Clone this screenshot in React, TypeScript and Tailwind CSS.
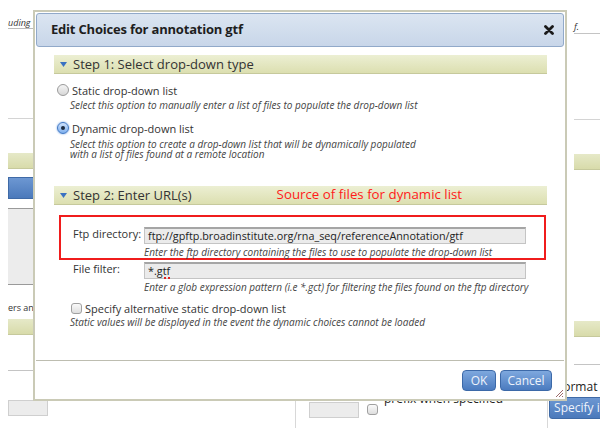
import React from "react";

const ui = "font-['Open_Sans','Liberation_Sans',sans-serif]";

function StepHeader({ title, note }: { title: string; note?: string }) {
  return (
    <div className="flex items-center h-[19px] bg-gradient-to-b from-[#ecefd3] to-[#dcdfb0] border-b border-[#c6c99c] pl-[6px]">
      <svg width="7" height="5" viewBox="0 0 7 5" className="mr-[6px]">
        <polygon points="0,0 7,0 3.5,5" fill="#3a72c2" />
      </svg>
      <span className="text-[13px] text-[#333] leading-none">{title}</span>
      {note && (
        <span className="ml-[85px] text-[13.3px] text-[#ff1a1a] leading-none">{note}</span>
      )}
    </div>
  );
}

function Radio({ checked }: { checked?: boolean }) {
  if (checked) {
    return (
      <span className="flex items-center justify-center w-[12px] h-[12px] rounded-full border border-[#3f77c4] bg-gradient-to-b from-[#cfe2fb] to-[#7fb0ee] shadow-[0_0_2px_#5b95e0]">
        <span className="w-[4px] h-[4px] rounded-full bg-[#1c2b40]" />
      </span>
    );
  }
  return (
    <span className="w-[12px] h-[12px] rounded-full border border-[#9a9a9a] bg-gradient-to-b from-[#f4f4f4] to-[#d8d8d8]" />
  );
}

function Field({ label, value, help }: { label: string; value: React.ReactNode; help: string }) {
  return (
    <div className="flex">
      <div className="w-[72px] pl-[1px] pt-[1px] text-[11px] text-[#333] leading-none whitespace-nowrap">{label}</div>
      <div className="flex flex-col">
        <div className="w-[382px] h-[17px] bg-[#ebebeb] border border-[#c4c4c4] border-t-2 border-t-[#a5a5a5] pl-[3px] text-[10.8px] text-[#222] leading-[14px] whitespace-nowrap">
          {value}
        </div>
        <div className="mt-[3px] text-[10px] italic text-[#444] leading-none whitespace-nowrap">{help}</div>
      </div>
    </div>
  );
}

function OliveBar() {
  return <div className="h-[16px] bg-gradient-to-b from-[#e6e9c8] to-[#d8dbaa] border-b border-[#c6c99c]" />;
}

export default function App() {
  return (
    <div className={`relative w-[600px] h-[428px] overflow-hidden bg-white ${ui}`}>
      {/* page behind the dialog */}
      <div className="flex h-full">
        <div className="w-[48px] flex flex-col pl-[8px]">
          <div className="mt-[18px] text-[9px] italic text-[#333] leading-none border-b border-[#bbb] pb-[1px]">uding</div>
          <div className="mt-[89px] border-b border-[#d4d4d4]" />
          <div className="mt-[34px]">
            <OliveBar />
          </div>
          <div className="mt-[8px] h-[22px] bg-gradient-to-b from-[#6d97d2] to-[#4b79bb] border border-[#3f6aa6]" />
          <div className="mt-[9px] h-[77px] bg-[#ececec] border-y border-[#9a9a9a]" />
          <div className="mt-[18px] text-[9px] text-[#333] leading-none">ers an</div>
          <div className="mt-[7px]">
            <OliveBar />
          </div>
          <div className="mt-[35px] border-b border-[#c4c4c4]" />
          <div className="mt-[29px] w-[40px] h-[16px] bg-[#ececec] border border-[#cfcfcf]" />
        </div>
        <div className="flex-1 flex flex-col justify-end">
          <div className="flex h-[28px]">
            <div className="w-[248px] border-r border-[#d8d8d8]" />
            <div className="ml-[13px] mt-[2px] w-[50px] h-[16px] bg-[#ececec] border border-[#cfcfcf]" />
            <div className="ml-[8px] mt-[4px] w-[11px] h-[11px] rounded-[3px] border border-[#a0a0a0] bg-gradient-to-b from-[#fafafa] to-[#dedede]" />
            <div className="ml-[6px] -mt-[8px] text-[12px] text-[#222] leading-[14px] whitespace-nowrap">prefix when specified</div>
            <div className="ml-[44px] border-r border-[#d8d8d8]" />
          </div>
        </div>
        <div className="w-[59px] flex flex-col">
          <div className="ml-[26px] mr-[7px] mt-[22px] text-[9px] italic text-[#333] leading-none border-b border-[#c4c4c4] pb-[2px]">f.</div>
          <div className="ml-[26px] mr-[7px] mt-[85px] border-b border-[#d4d4d4]" />
          <div className="ml-[26px] mr-[7px] mt-[34px]">
            <OliveBar />
          </div>
          <div className="ml-[26px] mr-[7px] mt-[151px]">
            <OliveBar />
          </div>
          <div className="ml-[26px] mr-[7px] mt-[27px] border-b border-[#c4c4c4]" />
          <div className="ml-[9px] mt-[16px] text-[12px] text-[#222] leading-none whitespace-nowrap">Format</div>
          <div className="ml-[1px] mt-[4px] h-[22px] w-[70px] bg-gradient-to-b from-[#6d97d2] to-[#4b79bb] border border-[#3f6aa6] rounded-[3px] text-[12px] text-[#eef3fb] leading-[20px] pl-[4px] whitespace-nowrap">
            Specify input
          </div>
        </div>
      </div>

      {/* dialog */}
      <div className="absolute left-[33px] top-[10px] w-[534px] h-[391px] bg-white border-2 border-[#cacab6] flex flex-col">
        <div className="flex items-center justify-between h-[34px] mx-[1px] mt-[1px] rounded-[3px] border border-[#91a9c9] bg-gradient-to-b from-[#dbe5f1] to-[#c8d6e9] pl-[14px] pr-[9px]">
          <span className="text-[13px] font-bold text-[#1e1e1e] tracking-[-0.2px]">Edit Choices for annotation gtf</span>
          <svg width="10" height="10" viewBox="0 0 10 10">
            <path d="M1.5 1.5 L8.5 8.5 M8.5 1.5 L1.5 8.5" stroke="#1a1a1a" strokeWidth="2.8" strokeLinecap="round" />
          </svg>
        </div>

        <div className="ml-[19px] mr-[18px] mt-[8px] flex flex-col">
          <StepHeader title="Step 1: Select drop-down type" />

          <div className="flex items-center gap-[3px] mt-[10px] ml-[3px]">
            <Radio />
            <span className="text-[11px] text-[#333] leading-none">Static drop-down list</span>
          </div>
          <div className="mt-[4px] ml-[16px] text-[10px] italic text-[#444] leading-[10px]">
            Select this option to manually enter a list of files to populate the drop-down list
          </div>

          <div className="flex items-center gap-[3px] mt-[12px] ml-[3px]">
            <Radio checked />
            <span className="text-[11px] text-[#333] leading-none">Dynamic drop-down list</span>
          </div>
          <div className="mt-[5px] ml-[16px] text-[10px] italic text-[#444] leading-[10px]">
            Select this option to create a drop-down list that will be dynamically populated
            <br />
            with a list of files found at a remote location
          </div>

          <div className="mt-[27px]">
            <StepHeader title="Step 2: Enter URL(s)" note="Source of files for dynamic list" />
          </div>

          <div className="mt-[10px] ml-[5px] mr-[1px] h-[45px] border-2 border-solid border-[#f01c1c] pt-[10px] pl-[11px]">
            <Field
              label="Ftp directory:"
              value="ftp://gpftp.broadinstitute.org/rna_seq/referenceAnnotation/gtf"
              help="Enter the ftp directory containing the files to use to populate the drop-down list"
            />
          </div>

          <div className="mt-[2px] ml-[18px]">
            <Field
              label="File filter:"
              value={
                <span>
                  *.<span className="underline decoration-dotted decoration-[#e02020] decoration-2 underline-offset-2">gtf</span>
                </span>
              }
              help="Enter a glob expression pattern (i.e *.gct) for filtering the files found on the ftp directory"
            />
          </div>

          <div className="flex items-center gap-[3px] mt-[11px] ml-[17px]">
            <span className="w-[11px] h-[11px] rounded-[3px] border border-[#a0a0a0] bg-gradient-to-b from-[#fafafa] to-[#dedede]" />
            <span className="text-[11px] text-[#333] leading-none">Specify alternative static drop-down list</span>
          </div>
          <div className="mt-[3px] ml-[16px] text-[10px] italic text-[#444] leading-[10px]">
            Static values will be displayed in the event the dynamic choices cannot be loaded
          </div>
        </div>

        <div className="mt-auto mb-[38px] mx-[1px] border-b border-[#bdbdb0]" />
        <div className="absolute right-[13px] bottom-[8px] flex gap-[4px]">
          <div className="w-[34px] h-[21px] rounded-[4px] border border-[#3c69a8] bg-gradient-to-b from-[#7ea8de] to-[#4b7bbf] text-[12px] text-[#eef3fb] leading-[19px] text-center">
            OK
          </div>
          <div className="w-[52px] h-[21px] rounded-[4px] border border-[#3c69a8] bg-gradient-to-b from-[#7ea8de] to-[#4b7bbf] text-[12px] text-[#eef3fb] leading-[19px] text-center">
            Cancel
          </div>
        </div>
        <svg width="10" height="10" viewBox="0 0 10 10" className="absolute right-[1px] bottom-[1px]">
          <path d="M9 2 L2 9 M9 5 L5 9 M9 8 L8 9" stroke="#9c6b6b" strokeWidth="1" />
        </svg>
      </div>
    </div>
  );
}
